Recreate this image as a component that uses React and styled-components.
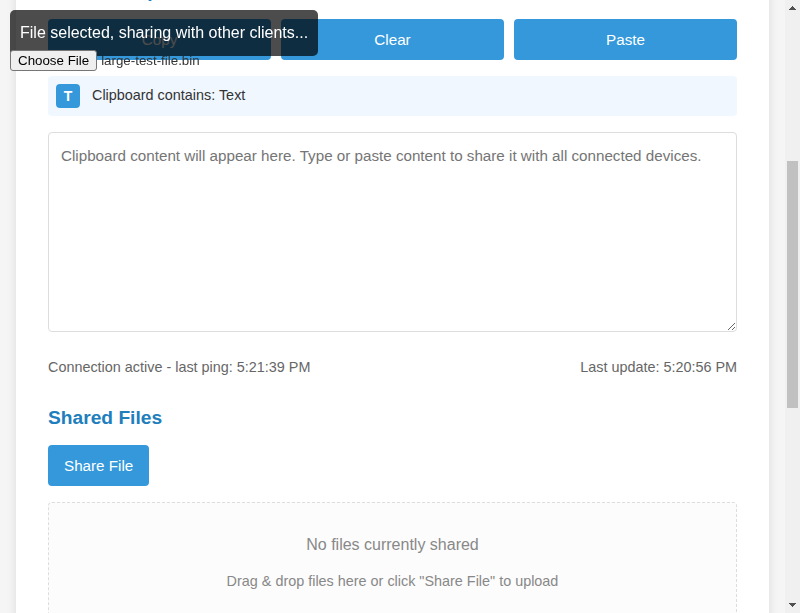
import React from 'react';
import styled, { createGlobalStyle } from 'styled-components';

const GlobalStyle = createGlobalStyle`
  * { box-sizing: border-box; }
  body {
    margin: 0;
    overflow: hidden;
    background: #f5f5f5;
    color: #333;
    font-family: "Liberation Sans", Arial, sans-serif;
    font-size: 16px;
    line-height: 1.6;
  }
`;

const Window = styled.div`
  display: flex;
  height: 613px;
  overflow: hidden;
`;

const Page = styled.div`
  flex: 1;
  display: flex;
  flex-direction: column;
  justify-content: flex-start;
  padding: 0 16px;
  overflow: hidden;
`;

const Card = styled.main`
  flex: none;
  height: 780px;
  margin-top: -60px;
  padding: 32px 32px 0;
  background: #fff;
  box-shadow: 0 2px 10px rgba(0, 0, 0, 0.1);
`;

const Heading = styled.h2`
  margin: ${({ $top }) => $top}px 0 ${({ $bottom = 12 }) => $bottom}px;
  color: #217ebc;
  font-size: 19.2px;
  line-height: 31px;
`;

const Actions = styled.div`
  display: flex;
  gap: 10px;
  margin-bottom: 16px;
`;

const Button = styled.button`
  flex: ${({ $fill }) => ($fill ? 1 : 'none')};
  height: 41px;
  padding: 0 16px;
  border: 0;
  border-radius: 4px;
  background: #3498db;
  color: #fff;
  font: 15.2px "Liberation Sans", Arial, sans-serif;
`;

const TypeBar = styled.div`
  display: flex;
  align-items: center;
  gap: 12px;
  height: 40px;
  padding: 8px;
  border-radius: 4px;
  background: #f0f7ff;
  font-size: 14.4px;
`;

const TypeLabel = styled.span`
  line-height: 23px;
  margin-top: -2px;
`;

const TypeIcon = styled.span`
  display: flex;
  align-items: center;
  justify-content: center;
  width: 24px;
  height: 24px;
  border-radius: 4px;
  background: #3498db;
  color: #fff;
  font-size: 14px;
  font-weight: bold;
`;

const Editor = styled.textarea`
  display: block;
  width: 100%;
  height: 200px;
  margin-top: 16px;
  padding: 12px;
  border: 1px solid #ddd;
  border-radius: 4px;
  resize: vertical;
  font: 15.2px/22.8px "Liberation Sans", Arial, sans-serif;
`;

const Status = styled.div`
  display: flex;
  justify-content: space-between;
  margin-top: 24px;
  color: #666;
  font-size: 14.4px;
  line-height: 23px;
`;

const DropZone = styled.section`
  height: 150px;
  padding: 29px 32px;
  border: 1px dashed #ddd;
  border-radius: 4px;
  background: #fcfcfc;
  color: #888;
  text-align: center;
`;

const DropText = styled.p`
  margin: 0 0 13px;
  font-size: ${({ $small }) => ($small ? '14.4px' : '16px')};
  line-height: ${({ $small }) => ($small ? '23px' : '25px')};
`;

const Toast = styled.div`
  position: fixed;
  top: 10px;
  left: 10px;
  height: 46px;
  padding: 10px;
  border-radius: 5px;
  background: rgba(0, 0, 0, 0.7);
  color: #fff;
  line-height: 25.6px;
  white-space: nowrap;
`;

const FilePicker = styled.div`
  position: fixed;
  top: 50px;
  left: 10px;
  display: flex;
  align-items: center;
  gap: 4px;
  font-size: 13.333px;
  line-height: 21px;
`;

const ChooseButton = styled.button`
  height: 21px;
  padding: 1px 7px;
  border: 1px solid #767676;
  border-radius: 3px;
  background: #efefef;
  color: #000;
  font: 13.333px "Liberation Sans", Arial, sans-serif;
`;

const Scrollbar = styled.div`
  flex: none;
  display: flex;
  flex-direction: column;
  align-items: center;
  justify-content: space-between;
  width: 15px;
  padding: 6px 0;
  background: #f0f0f0;
`;

const Thumb = styled.div`
  width: 11px;
  height: 247px;
  margin: 151px 0 auto;
  background: #c1c1c1;
`;

const Arrow = styled.svg`
  display: block;
  flex: none;
`;

export default function App() {
  return (
    <Window>
      <GlobalStyle />
      <Page>
        <Card>
          <Heading $top={3} $bottom={13}>Current Clipboard</Heading>
          <Actions>
            <Button $fill>Copy</Button>
            <Button $fill>Clear</Button>
            <Button $fill>Paste</Button>
          </Actions>
          <TypeBar>
            <TypeIcon>T</TypeIcon>
            <TypeLabel>Clipboard contains: Text</TypeLabel>
          </TypeBar>
          <Editor placeholder="Clipboard content will appear here. Type or paste content to share it with all connected devices." />
          <Status>
            <span>Connection active - last ping: 5:21:39 PM</span>
            <span>Last update: 5:20:56 PM</span>
          </Status>
          <Heading $top={23}>Shared Files</Heading>
          <Actions>
            <Button>Share File</Button>
          </Actions>
          <DropZone>
            <DropText>No files currently shared</DropText>
            <DropText $small>Drag &amp; drop files here or click "Share File" to upload</DropText>
          </DropZone>
        </Card>
      </Page>
      <Scrollbar>
        <Arrow width="7" height="4" shapeRendering="crispEdges">
          <path d="M3 0h1v1h1v1h1v1h1v1H0V3h1V2h1V1h1z" fill="#505050" />
        </Arrow>
        <Thumb />
        <Arrow width="7" height="4" shapeRendering="crispEdges">
          <path d="M0 0h7v1H6v1H5v1H4v1H3V3H2V2H1V1H0z" fill="#505050" />
        </Arrow>
      </Scrollbar>
      <Toast>File selected, sharing with other clients...</Toast>
      <FilePicker>
        <ChooseButton>Choose File</ChooseButton>
        <span>large-test-file.bin</span>
      </FilePicker>
    </Window>
  );
}
